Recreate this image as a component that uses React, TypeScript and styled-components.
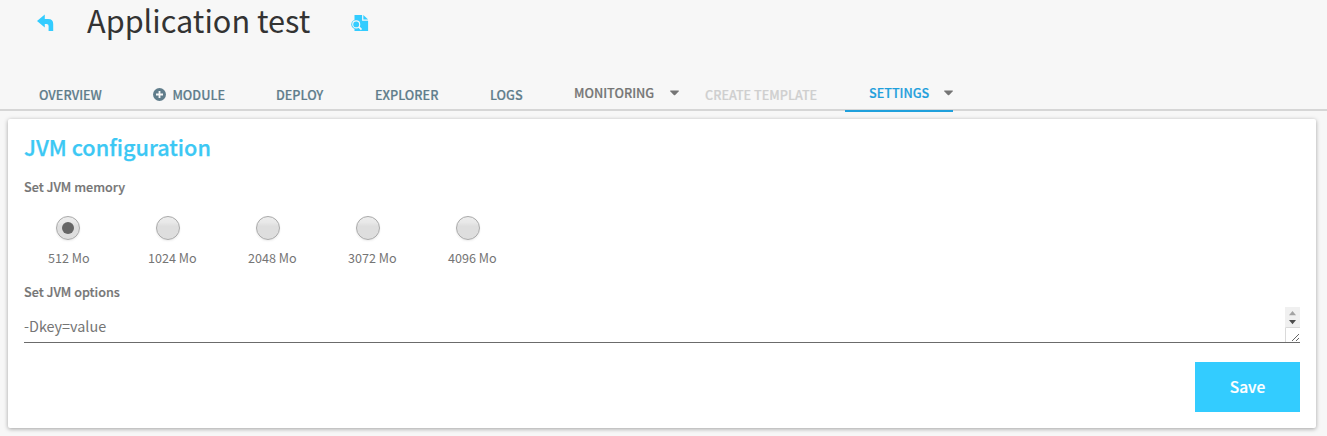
import React from "react";
import styled, { createGlobalStyle } from "styled-components";

const Global = createGlobalStyle`
  * { box-sizing: border-box; }
  body {
    margin: 0;
    height: 436px;
    overflow: hidden;
    background: #f7f7f7;
    color: #757575;
    font-family: "Noto Sans CJK SC", "Noto Sans", sans-serif;
  }
`;

const Page = styled.div`
  height: 436px;
  display: flex;
  flex-direction: column;
`;

const Header = styled.header`
  display: flex;
  align-items: center;
  height: 46px;
  flex: none;
  padding-left: 36px;
`;

const BackIcon = styled.svg`
  display: block;
  width: 19px;
  height: 18px;
  margin-right: 32px;
`;

const Title = styled.h1`
  margin: 0;
  width: 264px;
  padding-bottom: 6px;
  font-size: 30.65px;
  font-weight: 400;
  line-height: 40px;
  color: #333;
  white-space: nowrap;
`;

const FileIcon = styled.svg`
  display: block;
  width: 18px;
  height: 18px;
`;

const Nav = styled.nav`
  display: flex;
  height: 65px;
  flex: none;
  align-items: flex-end;
  border-bottom: 2px solid #d6d6d6;
`;

const Tab = styled.div<{ $start: number; $width: number; $tone?: string; $raised?: boolean; $active?: boolean }>`
  display: flex;
  align-items: center;
  justify-content: space-between;
  width: ${(p) => p.$width}px;
  height: ${(p) => (p.$raised ? 36 : 28)}px;
  margin-left: ${(p) => p.$start}px;
  margin-bottom: ${(p) => (p.$raised ? -3 : -1)}px;
  padding-left: ${(p) => (p.$active ? 24 : 0)}px;
  border-bottom: 2px solid ${(p) => (p.$active ? "#1fa0dc" : "transparent")};
  font-size: 12.6px;
  font-weight: 500;
  line-height: 20px;
  white-space: nowrap;
  -webkit-text-stroke: 0.2px currentColor;
  color: ${(p) => p.$tone ?? "#607d8b"};
`;

const PlusIcon = styled.svg`
  width: 13px;
  height: 13px;
  margin-bottom: 2px;
  flex: none;
`;

const Caret = styled.svg`
  width: 9px;
  height: 6px;
  flex: none;
`;

const Card = styled.main`
  width: 1308px;
  height: 309px;
  margin: 8px 0 0 8px;
  padding: 12px 16px 0;
  background: #fff;
  border-radius: 2px;
  box-shadow: 0 1px 4px rgba(0, 0, 0, 0.35);
`;

const CardTitle = styled.h2`
  margin: 0;
  font-size: 21.7px;
  font-weight: 500;
  line-height: 32px;
  color: #3cc8f4;
  -webkit-text-stroke: 0.25px currentColor;
`;

const Label = styled.div<{ $top: number }>`
  margin-top: ${(p) => p.$top}px;
  font-size: 12.6px;
  font-weight: 500;
  line-height: 20px;
  -webkit-text-stroke: 0.2px currentColor;
`;

const Options = styled.div`
  display: flex;
  padding: 19px 0 0 24px;
`;

const Option = styled.label`
  width: 100px;
  font-size: 12.6px;
  line-height: 20px;
`;

const Radio = styled.span<{ $on?: boolean }>`
  display: flex;
  align-items: center;
  justify-content: center;
  width: 24px;
  height: 24px;
  margin: 0 0 8px 8px;
  border: 1px solid #a9a9a9;
  border-radius: 50%;
  background: linear-gradient(#ededed, #e8e8e8 25%, #dedede 42%, #dedede);
  box-shadow: 0 1px 2px rgba(0, 0, 0, 0.08);
  &::after {
    content: "";
    width: 12px;
    height: 12px;
    border-radius: 50%;
    background: ${(p) => (p.$on ? "#666" : "transparent")};
  }
`;

const Field = styled.div`
  display: flex;
  justify-content: space-between;
  height: 36px;
  margin-top: 5px;
  border-bottom: 1px solid #6b6b6b;
  font-size: 14.4px;
  line-height: 38px;
`;

const ScrollSide = styled.svg`
  display: block;
  width: 15px;
  height: 35px;
`;

const Actions = styled.div`
  display: flex;
  justify-content: flex-end;
  padding-top: 19px;
`;

const Save = styled.button`
  width: 105px;
  height: 50px;
  padding: 0 0 3px;
  border: 0;
  background: #33ccff;
  color: #fff;
  font-family: inherit;
  font-size: 15.5px;
  font-weight: 500;
  line-height: 24px;
  -webkit-text-stroke: 0.2px currentColor;
`;

const Down = () => (
  <Caret viewBox="0 0 9 6">
    <path d="M.4.5h8.2q.5.3 0 .9L5.2 5q-.7.7-1.4 0L.4 1.4Q-.1.8.4.5Z" fill="#757575" />
  </Caret>
);

const sizes = ["512 Mo", "1024 Mo", "2048 Mo", "3072 Mo", "4096 Mo"];

export default function App() {
  return (
    <>
      <Global />
      <Page>
        <Header>
          <BackIcon viewBox="0 0 19 18">
            <path d="M1 6.9 8.8.6v4.3h3.4q5 0 5 5V17h-4.6v-4.9q0-2-2-2H8.8v3.5Z" fill="#33ccff" />
          </BackIcon>
          <Title>Application test</Title>
          <FileIcon viewBox="0 0 18 18">
            <path d="M3.5 1h7.6v5.8h6V17H3.5Z" fill="#33ccff" />
            <path d="M12.3 1 17.1 5.6H12.3Z" fill="#33ccff" />
            <circle cx="5" cy="10.4" r="4.7" fill="#33ccff" />
            <circle cx="5.2" cy="10.4" r="3.5" fill="none" stroke="#f7f7f7" strokeWidth="1.1" />
            <path d="m7.8 12.9 2.7 2.7" stroke="#f7f7f7" strokeWidth="1.7" />
          </FileIcon>
        </Header>
        <Nav>
          <Tab $start={39} $width={63}>OVERVIEW</Tab>
          <Tab $start={51} $width={72}>
            <PlusIcon viewBox="0 0 13 13">
              <circle cx="6.5" cy="6.5" r="6.5" fill="#607d8b" />
              <path d="M6.5 3v7M3 6.5h7" stroke="#f7f7f7" strokeWidth="1.8" />
            </PlusIcon>
            MODULE
          </Tab>
          <Tab $start={51} $width={48}>DEPLOY</Tab>
          <Tab $start={51} $width={64}>EXPLORER</Tab>
          <Tab $start={51} $width={33}>LOGS</Tab>
          <Tab $start={51} $width={105} $tone="#757575" $raised>
            MONITORING
            <Down />
          </Tab>
          <Tab $start={26} $width={113} $tone="#cfcfcf">CREATE TEMPLATE</Tab>
          <Tab $start={27} $width={108} $tone="#1fa0dc" $raised $active>
            SETTINGS
            <Down />
          </Tab>
        </Nav>
        <Card>
          <CardTitle>JVM configuration</CardTitle>
          <Label $top={14}>Set JVM memory</Label>
          <Options>
            {sizes.map((size, i) => (
              <Option key={size}>
                <Radio $on={i === 0} />
                {size}
              </Option>
            ))}
          </Options>
          <Label $top={14}>Set JVM options</Label>
          <Field>
            -Dkey=value
            <ScrollSide viewBox="0 0 15 35">
              <path d="M0 0h15v20H0Z" fill="#f0f0f0" />
              <path d="M4 8.2 7.5 4 11 8.2Z" fill="#a3a3a3" />
              <path d="M4 13 7.5 17.2 11 13Z" fill="#4d4d4d" />
              <path d="M.5 35V20.5H15" fill="none" stroke="#dadada" />
              <path d="m7 34 7-7M11 34l3-3" stroke="#666" />
            </ScrollSide>
          </Field>
          <Actions>
            <Save>Save</Save>
          </Actions>
        </Card>
      </Page>
    </>
  );
}
